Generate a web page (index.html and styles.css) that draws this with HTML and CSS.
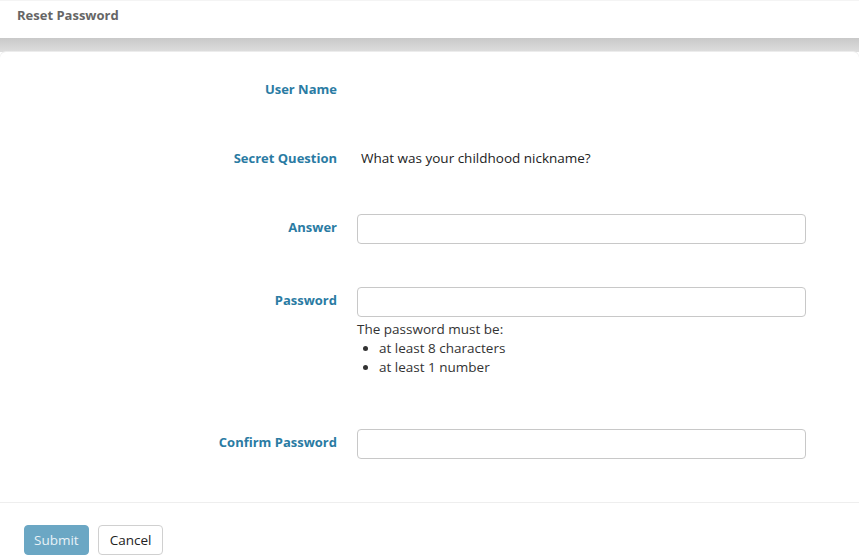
FILE: index.html
```html
<!DOCTYPE html>
<html lang="en">
<head>
  <meta charset="UTF-8">
  <title>Reset Password</title>
  <link rel="stylesheet" href="styles.css">
</head>
<body>
  <div class="header">Reset Password</div>
  <div class="card">
    <form class="form">
      <div class="row">
        <label class="label">User Name</label>
        <div class="field"></div>
      </div>
      <div class="row">
        <label class="label">Secret Question</label>
        <div class="field value">What was your childhood nickname?</div>
      </div>
      <div class="row">
        <label class="label">Answer</label>
        <div class="field"><input type="text" class="input"></div>
      </div>
      <div class="row">
        <label class="label">Password</label>
        <div class="field">
          <input type="password" class="input">
          <div class="help">
            The password must be:
            <ul>
              <li>at least 8 characters</li>
              <li>at least 1 number</li>
            </ul>
          </div>
        </div>
      </div>
      <div class="row">
        <label class="label">Confirm Password</label>
        <div class="field"><input type="password" class="input"></div>
      </div>
    </form>
    <div class="footer">
      <button type="button" class="btn btn-primary">Submit</button>
      <button type="button" class="btn">Cancel</button>
    </div>
  </div>
</body>
</html>
```

FILE: styles.css
```css
html, body {
  margin: 0;
  padding: 0;
  font-family: "Open Sans", "Noto Sans", sans-serif;
  font-size: 13px;
  color: #222;
}
body {
  background: linear-gradient(#fff 0, #fff 38px, #c9c9c9 38px, #dedede 52px, #fff 52px);
  min-height: 100vh;
}
.header {
  height: 38px;
  padding-left: 17px;
  line-height: 29px;
  font-weight: 700;
  font-size: 13px;
  color: #666;
  background: #fff;
  border-top: 1px solid #f4f4f4;
  box-sizing: border-box;
}
.card {
  margin-top: 14px;
  background: #fff;
  border-radius: 6px 6px 0 0;
  box-shadow: 0 -1px 0 #ececec;
}
.form {
  padding: 24px 0 43px;
  display: flex;
  flex-direction: column;
  gap: 43px;
  border-bottom: 1px solid #eee;
}
.row {
  display: grid;
  grid-template-columns: 337px 449px;
  column-gap: 20px;
  align-items: start;
}
.label {
  text-align: right;
  font-weight: 700;
  color: #2a7ba3;
  line-height: 26px;
}
.field {
  min-height: 26px;
}
.value {
  line-height: 26px;
  padding-left: 4px;
  font-size: 13.5px;
}
.input {
  display: block;
  width: 100%;
  height: 30px;
  box-sizing: border-box;
  border: 1px solid #c8c8c8;
  border-radius: 4px;
  background: #fff;
  font: inherit;
  padding: 0 8px;
}
.help {
  margin-top: 3px;
  padding-bottom: 9px;
  line-height: 19px;
  font-size: 13.5px;
  color: #333;
}
.help ul {
  margin: 0;
  padding-left: 22px;
}
.footer {
  padding: 22px 24px 0;
  display: flex;
  gap: 9px;
}
.btn {
  height: 30px;
  padding: 0 11px;
  font: inherit;
  font-size: 13.5px;
  color: #222;
  background: #fff;
  border: 1px solid #d0d0d0;
  border-radius: 4px;
}
.btn-primary {
  padding: 0 9px;
  background: #6ba7c4;
  border-color: #6ba7c4;
  color: #e8f2f7;
}
```
